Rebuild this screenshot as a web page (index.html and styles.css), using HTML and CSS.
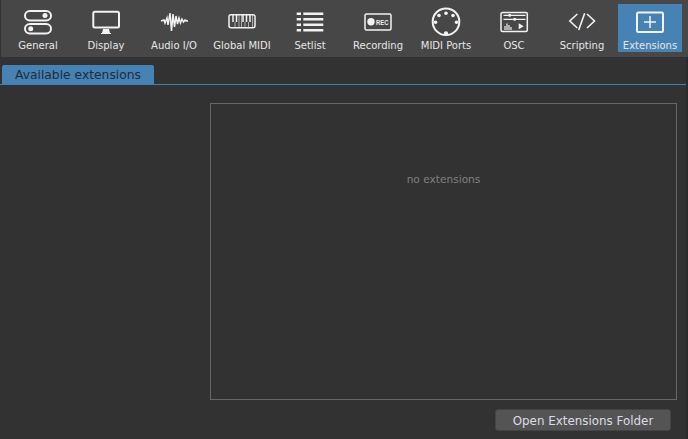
FILE: index.html
```html
<!DOCTYPE html>
<html lang="en">
<head>
    <meta charset="UTF-8">
    <title>Extensions</title>
    <link rel="stylesheet" href="styles.css">
</head>
<body>
    <div class="toolbar">
        <div class="tool">
            <svg class="icon" width="34" height="30" viewBox="0 0 34 30">
                <rect x="4" y="5" width="26" height="9.500" rx="4.750"/>
                <rect x="4" y="18" width="26" height="9.500" rx="4.750"/>
                <circle class="fill" cx="24" cy="9.500" r="2.500"/>
                <circle class="fill" cx="9.700" cy="22.700" r="2.500"/>
            </svg>
            <span>General</span>
        </div>
        <div class="tool">
            <svg class="icon" width="34" height="30" viewBox="0 0 34 30">
                <rect x="4.300" y="5.700" width="25.700" height="15.800" rx="1.500"/>
                <path class="fill" d="M14 23h6l1 4h-8z"/>
                <path d="M12 27.500h10" stroke-width="1"/>
            </svg>
            <span>Display</span>
        </div>
        <div class="tool">
            <svg class="icon wave" width="34" height="30" viewBox="0 0 34 30">
                <path d="M4 15l3-1 1 3 2-5 1 7 2-12 1.500 18 1.500-17 1.500 13 1.500-11 1.500 8 1.500-6 1.500 5 1.500-4 1.500 3 1.500-2 2 1h1"/>
            </svg>
            <span>Audio I/O</span>
        </div>
        <div class="tool">
            <svg class="icon thin" width="34" height="30" viewBox="0 0 34 30">
                <rect x="4" y="8.700" width="26" height="13" rx="2" stroke-width="1.500"/>
                <path class="keys" d="M8 9v7M11.500 9v7M18 9v7M21.500 9v7M25 9v7"/>
                <path class="key-lines" d="M10 16v5M14 9v12M16.500 9v12M20 16v5M23.500 16v5M27.500 9v12"/>
            </svg>
            <span>Global MIDI</span>
        </div>
        <div class="tool">
            <svg class="icon" width="34" height="30" viewBox="0 0 34 30">
                <path d="M10.300 7.700h20M10.300 13.300h20M10.300 18.700h20M10.300 24.300h20M3.700 7.700h4.300M3.700 13.300h4.300M3.700 18.700h4.300M3.700 24.300h4.300" stroke-width="2.500"/>
            </svg>
            <span>Setlist</span>
        </div>
        <div class="tool">
            <svg class="icon" width="34" height="30" viewBox="0 0 34 30">
                <rect x="4" y="8" width="26" height="16" rx="1.500" stroke-width="1.500"/>
                <circle class="fill" cx="10" cy="15.700" r="3.700"/>
                <text class="rec" x="15" y="18.500" textLength="12.500" lengthAdjust="spacingAndGlyphs">REC</text>
            </svg>
            <span>Recording</span>
        </div>
        <div class="tool">
            <svg class="icon" width="34" height="30" viewBox="0 0 34 30">
                <circle cx="17" cy="15.700" r="13.300"/>
                <circle class="fill" cx="17" cy="7.300" r="1.800"/>
                <circle class="fill" cx="10" cy="9.500" r="1.800"/>
                <circle class="fill" cx="24" cy="9.500" r="1.800"/>
                <circle class="fill" cx="6.500" cy="16.300" r="1.800"/>
                <circle class="fill" cx="27.500" cy="16.300" r="1.800"/>
                <circle class="fill" cx="17" cy="27.500" r="2.200"/>
            </svg>
            <span>MIDI Ports</span>
        </div>
        <div class="tool">
            <svg class="icon thin" width="34" height="30" viewBox="0 0 34 30">
                <rect x="4" y="6.500" width="26.300" height="19" rx="1.500" stroke-width="1.500"/>
                <path d="M6.500 9.300h22M6.500 13.300h22M8 24v-4M10 24v-6.500M12 24v-5M14 24v-3"/>
                <circle class="fill" cx="12.700" cy="9.300" r="1.500"/>
                <circle class="fill" cx="17.700" cy="13.300" r="1.500"/>
                <path class="fill" d="M21.700 17.300l5 3-5 3z"/>
            </svg>
            <span>OSC</span>
        </div>
        <div class="tool">
            <svg class="icon" width="34" height="30" viewBox="0 0 34 30">
                <path d="M12.300 8l-7.500 7 7.500 7M22 8l7.500 7-7.500 7M19.700 7.300l-6 16.700" stroke-width="1.600"/>
            </svg>
            <span>Scripting</span>
        </div>
        <div class="tool active">
            <svg class="icon" width="34" height="30" viewBox="0 0 34 30">
                <rect x="4" y="6.500" width="26" height="19.500" rx="1.500"/>
                <path d="M17 10v12M11 16h12" stroke-width="1.500"/>
            </svg>
            <span>Extensions</span>
        </div>
    </div>

    <div class="page">
        <div class="tabs">
            <div class="tab">Available extensions</div>
        </div>

        <div class="content">
            <div class="list-box">no extensions</div>
            <div class="actions">
                <button class="folder-button">Open Extensions Folder</button>
            </div>
        </div>
    </div>
</body>
</html>
```

FILE: styles.css
```css
body {
    margin: 0;
    width: 688px;
    height: 439px;
    overflow: hidden;
    background-color: #2b2b2b;
    font-family: "DejaVu Sans", sans-serif;
    display: flex;
    flex-direction: column;
}
.toolbar {
    height: 57px;
    box-sizing: border-box;
    padding: 4px 0 0 5px;
    border-left: 1px solid #333333;
    background-color: #474747;
    display: flex;
    gap: 4px;
}
.tool {
    width: 64px;
    height: 48px;
    padding-top: 2px;
    box-sizing: border-box;
    display: flex;
    flex-direction: column;
    align-items: center;
    color: #e6e6e6;
    font-size: 10px;
}
.tool span {
    margin-top: 4px;
    line-height: 12px;
}
.tool.active {
    background-color: #4682b4;
}
.icon {
    display: block;
    fill: none;
    stroke: #f2f2f2;
    stroke-width: 2;
}
.icon.thin {
    stroke-width: 1.200;
}
.icon.wave {
    stroke-width: 1.500;
}
.icon .fill {
    fill: #f2f2f2;
    stroke: none;
}
.icon .keys {
    stroke-width: 1.500;
}
.icon .key-lines {
    stroke-width: 0.600;
}
.icon .rec {
    font-family: "Liberation Sans", sans-serif;
    font-size: 7.500px;
    font-weight: bold;
    fill: #f2f2f2;
    stroke: none;
}
.page {
    flex: 1;
    margin-right: 2px;
    background-color: #323232;
    display: flex;
    flex-direction: column;
}
.tabs {
    height: 28px;
    box-sizing: border-box;
    padding: 8px 0 0 2px;
    border-bottom: 1px solid #3f7fb8;
}
.tab {
    width: 152px;
    height: 19px;
    box-sizing: border-box;
    padding-left: 13px;
    background-color: #4682b4;
    border-radius: 2px 2px 0 0;
    color: #1d2c3a;
    font-size: 12.300px;
    line-height: 20px;
}
.content {
    flex: 1;
    display: flex;
    flex-direction: column;
    align-items: flex-end;
    padding: 18px 9px 8px 0;
}
.list-box {
    width: 467px;
    height: 297px;
    box-sizing: border-box;
    border: 1px solid #666666;
    padding-top: 68px;
    text-align: center;
    color: #808080;
    font-size: 10.600px;
    line-height: 14px;
}
.actions {
    margin: 9px 6px 0 0;
}
.folder-button {
    display: block;
    width: 176px;
    height: 22px;
    padding: 0;
    border: 1px solid #444444;
    border-radius: 3px;
    background-color: #545454;
    color: #dcdce6;
    font-family: "DejaVu Sans", sans-serif;
    font-size: 11.900px;
    line-height: 22px;
}
```
